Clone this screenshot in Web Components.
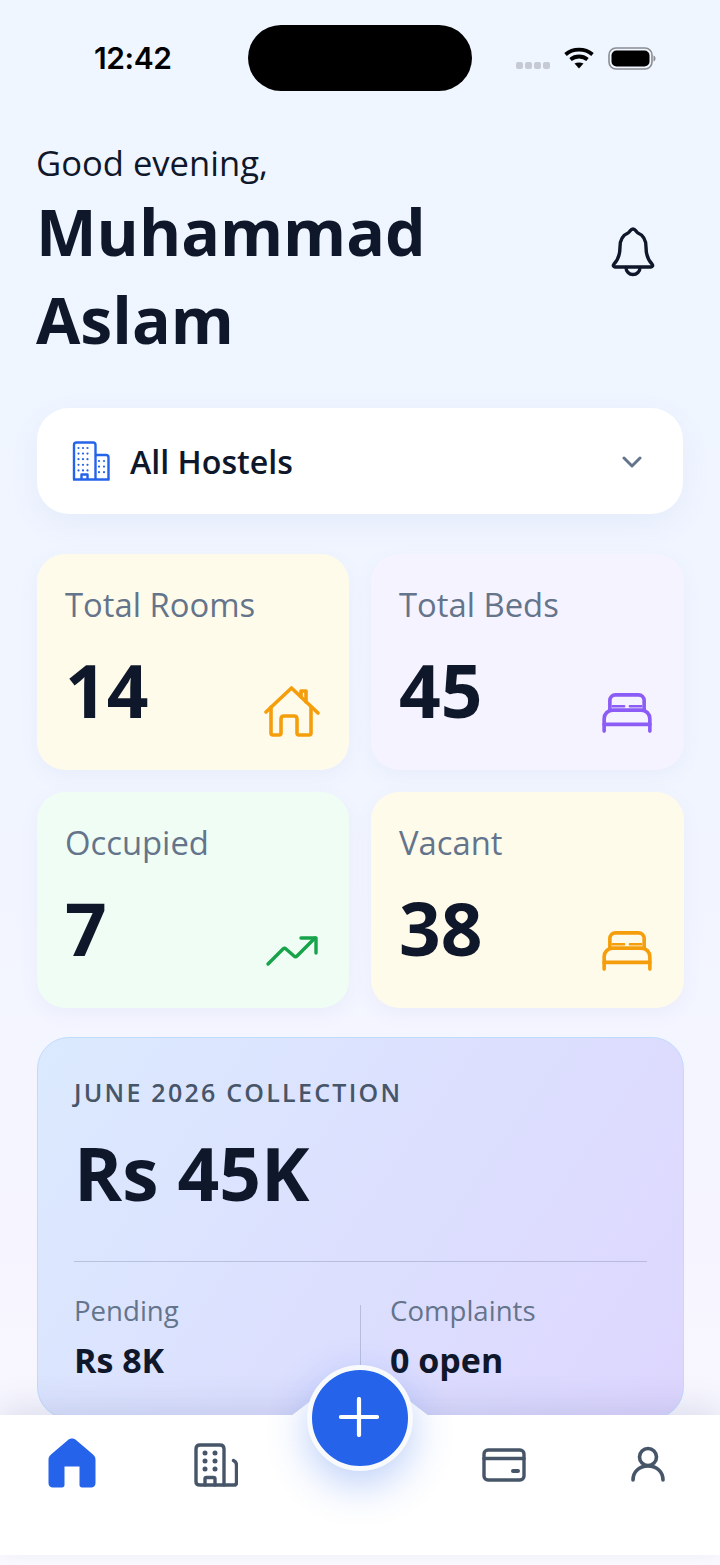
<!DOCTYPE html>
<html>
<head>
<meta charset="utf-8">
<title>Hostel dashboard</title>
<style>
  html, body { margin: 0; padding: 0; }
  body { width: 720px; height: 1565px; overflow: hidden; font-family: "Open Sans", sans-serif; color: #0f172a; }
  svg { display: block; }
</style>
</head>
<body>
<app-screen>
  <status-bar></status-bar>
  <greeting-header greeting="Good evening," name="Muhammad Aslam"></greeting-header>
  <hostel-picker label="All Hostels"></hostel-picker>
  <div slot="stats">
    <stat-card label="Total Rooms" value="14" tone="#fffbeb">
      <svg slot="icon" width="56" height="52" viewBox="0 0 56 52" fill="none" stroke="#f59e0b" stroke-width="3.6" stroke-linecap="round" stroke-linejoin="round" style="margin:0 -1px 0 0">
        <path d="M2 26 27.500 2 L54 27"/>
        <path d="M37 11V5h5v11"/>
        <path d="M7 21V47c0 1.500.7 2 2 2h6c1.300 0 2-.5 2-2V33c0-2 1-3 3-3h10c2 0 3 1 3 3V47c0 1.500.7 2 2 2h10c1.300 0 2-.5 2-2V21"/>
      </svg>
    </stat-card>
    <stat-card label="Total Beds" value="45" tone="#f5f3ff">
      <svg slot="icon" width="50" height="40" viewBox="0 0 52 42" fill="none" stroke="#8b5cf6" stroke-width="3.8" stroke-linecap="round" stroke-linejoin="round" style="margin:0 2px 5px 0">
        <path d="M2 40V27c0-5 4-9 9-9h30c5 0 9 4 9 9v13"/>
        <path d="M2 33h48"/>
        <path d="M8 18V8c0-3.500 2.500-6 6-6h24c3.500 0 6 2.500 6 6v10"/>
        <path d="M11 14h12M29 14h12" stroke-width="2.600"/>
      </svg>
    </stat-card>
    <stat-card label="Occupied" value="7" tone="#f0fdf4">
      <svg slot="icon" width="54" height="32" viewBox="0 0 54 32" fill="none" stroke="#16a34a" stroke-width="3.4" stroke-linecap="round" stroke-linejoin="round" style="margin-bottom:9px">
        <path d="M3 29 18 14c1-1 2-1 3 0l8 7c1 1 2 1 3 0L50 3"/>
        <path d="M36 3h15v15"/>
      </svg>
    </stat-card>
    <stat-card label="Vacant" value="38" tone="#fffbeb">
      <svg slot="icon" width="50" height="40" viewBox="0 0 52 42" fill="none" stroke="#f59e0b" stroke-width="3.8" stroke-linecap="round" stroke-linejoin="round" style="margin:0 2px 5px 0">
        <path d="M2 40V27c0-5 4-9 9-9h30c5 0 9 4 9 9v13"/>
        <path d="M2 33h48"/>
        <path d="M8 18V8c0-3.500 2.500-6 6-6h24c3.500 0 6 2.500 6 6v10"/>
        <path d="M11 14h12M29 14h12" stroke-width="2.600"/>
      </svg>
    </stat-card>
  </div>
  <collection-card slot="after" title="June 2026 Collection" amount="Rs 45K">
    <stat-split label="Pending" value="Rs 8K"></stat-split>
    <stat-split label="Complaints" value="0 open"></stat-split>
  </collection-card>
  <bottom-nav slot="overlay"></bottom-nav>
</app-screen>

<script>
  class AppScreen extends HTMLElement {
    constructor() {
      super();
      this.attachShadow({ mode: "open" });
    }

    connectedCallback() {
      this.shadowRoot.innerHTML = `
        <style>
          :host {
            display: block;
            position: relative;
            width: 720px;
            height: 1565px;
            overflow: hidden;
            background: linear-gradient(180deg, #eff6ff 0%, #f0f5ff 45%, #f6f5ff 80%, #fafaff 100%);
          }
          .body { display: flex; flex-direction: column; padding: 0 36px 0 37px; }
          ::slotted([slot="stats"]) {
            display: grid;
            grid-template-columns: 312px 313px;
            grid-auto-rows: 216px;
            column-gap: 22px;
            row-gap: 22px;
            margin: 40px 0 29px 0;
          }
        </style>
        <div class="body">
          <slot></slot>
          <slot name="stats"></slot>
          <slot name="after"></slot>
        </div>
        <slot name="overlay"></slot>
      `;
    }
  }

  class StatusBar extends HTMLElement {
    constructor() {
      super();
      this.attachShadow({ mode: "open" });
    }

    connectedCallback() {
      this.shadowRoot.innerHTML = `
        <style>
          :host { display: block; margin: 0 -36px 0 -37px; height: 139px; }
          .bar { display: flex; align-items: flex-start; height: 66px; padding-top: 25px; }
          .time {
            width: 154px;
            margin-left: 94px;
            font: 600 30px/66px Inter, sans-serif;
            letter-spacing: -0.4px;
            height: 66px;
            color: #000;
          }
          .island { width: 224px; height: 66px; border-radius: 33px; background: #000; }
          .dots { display: flex; gap: 2px; margin: 37px 0 0 44px; }
          .dots i { width: 7px; height: 7px; border-radius: 2px; background: #c6cad5; }
          .wifi { margin: 22px 0 0 14px; }
          .battery { margin: 22px 0 0 14px; }
        </style>
        <div class="bar">
          <div class="time">12:42</div>
          <div class="island"></div>
          <div class="dots"><i></i><i></i><i></i><i></i></div>
          <svg class="wifi" width="30" height="22" viewBox="0 0 30 22" fill="none" stroke="#000" stroke-width="3.800">
            <path d="M1.500 7.500C9 1 21 1 28.500 7.500"/>
            <path d="M6.500 12.500C11.500 8.500 18.500 8.500 23.500 12.500"/>
            <path d="M15 21.500 10.500 16.500C13 15 17 15 19.500 16.500Z" fill="#000" stroke="none"/>
          </svg>
          <svg class="battery" width="48" height="24" viewBox="0 0 48 24">
            <rect x="1" y="1" width="43" height="21" rx="7" fill="none" stroke="#8b8d92" stroke-width="1.600"/>
            <rect x="3.500" y="3.500" width="38" height="16" rx="5" fill="#000"/>
            <path d="M45.500 8.500c1.500.5 2 1.700 2 3s-.5 2.500-2 3z" fill="#8b8d92"/>
          </svg>
        </div>
      `;
    }
  }

  class GreetingHeader extends HTMLElement {
    constructor() {
      super();
      this.attachShadow({ mode: "open" });
    }

    connectedCallback() {
      const greeting = this.getAttribute("greeting") || "";
      const name = this.getAttribute("name") || "";
      this.shadowRoot.innerHTML = `
        <style>
          :host { display: flex; align-items: flex-start; justify-content: space-between; height: 269px; }
          .text { margin-left: -1px; }
          .hello { font-size: 34.600px; line-height: 48px; color: #0f172a; }
          .name {
            width: 440px;
            font-size: 64.300px;
            font-weight: 700;
            line-height: 88px;
            color: #0f172a;
          }
          svg { margin: 88px 29px 0 0; }
        </style>
        <div class="text">
          <div class="hello">${greeting}</div>
          <div class="name">${name}</div>
        </div>
        <svg width="44" height="50" viewBox="0 0 44 50" fill="none" stroke="#0f172a" stroke-width="3.400" stroke-linecap="round" stroke-linejoin="round">
          <path d="M22 2c2.500 0 3 3 5 4 6 2.500 8 8 8 14 0 9 2 13 6 17 1.200 1.400.6 3-1 3H4c-1.600 0-2.200-1.600-1-3 4-4 6-8 6-17 0-6 2-11.500 8-14 2-1 2.500-4 5-4z"/>
          <path d="M15 40.500a7 7 0 0 0 14 0"/>
        </svg>
      `;
    }
  }

  class HostelPicker extends HTMLElement {
    constructor() {
      super();
      this.attachShadow({ mode: "open" });
    }

    connectedCallback() {
      const label = this.getAttribute("label") || "";
      let dots = "";
      for (let row = 0; row < 5; row++) {
        for (let col = 0; col < 3; col++) {
          dots += `<circle cx="${6.5 + col * 4.5}" cy="${7 + row * 5.6}" r="1.100"/>`;
        }
      }
      for (let row = 0; row < 3; row++) {
        for (let col = 0; col < 2; col++) {
          dots += `<circle cx="${27 + col * 5}" cy="${20 + row * 5.6}" r="1.100"/>`;
        }
      }
      this.shadowRoot.innerHTML = `
        <style>
          :host {
            display: flex;
            align-items: center;
            height: 106px;
            margin-right: 1px;
            padding: 0 41px 0 35px;
            border-radius: 32px;
            background: #fff;
            box-shadow: 0 10px 30px rgba(100, 116, 180, 0.07);
          }
          .label { flex: 1; margin-left: 20px; font-size: 32.200px; font-weight: 600; color: #0f172a; }
          .chevron { margin-top: 1px; }
        </style>
        <svg width="38" height="40" viewBox="0 0 38 40" fill="none" stroke="#2563eb" stroke-width="2.400" stroke-linejoin="round">
          <path d="M2 38.500V4c0-1.500 1-2.500 2.500-2.500H21c1.500 0 2.500 1 2.500 2.500v34.500"/>
          <path d="M23.500 14H34c1.500 0 2.500 1 2.500 2.500v22"/>
          <path d="M1 38.500h36.500"/>
          <path d="M9.500 38.500v-5h6v5"/>
          <g fill="#2563eb" stroke="none">${dots}</g>
        </svg>
        <div class="label">${label}</div>
        <svg class="chevron" width="20" height="12" viewBox="0 0 20 12" fill="none" stroke="#64748b" stroke-width="3" stroke-linecap="round" stroke-linejoin="round">
          <path d="M2 2l8 8 8-8"/>
        </svg>
      `;
    }
  }

  class StatCard extends HTMLElement {
    constructor() {
      super();
      this.attachShadow({ mode: "open" });
    }

    connectedCallback() {
      const label = this.getAttribute("label") || "";
      const value = this.getAttribute("value") || "";
      const tone = this.getAttribute("tone") || "#fff";
      this.shadowRoot.innerHTML = `
        <style>
          :host {
            display: flex;
            flex-direction: column;
            padding: 28px 30px 32px 28px;
            border-radius: 28px;
            background: ${tone};
            box-shadow: 0 6px 20px rgba(100, 116, 180, 0.06);
          }
          .label { font-size: 32.800px; line-height: 46px; color: #64748b; }
          .row { display: flex; justify-content: space-between; align-items: flex-end; margin-top: 8px; flex: 1; }
          .value { margin-bottom: 6px; font-size: 73px; font-weight: 700; line-height: 84px; color: #0f172a; }
        </style>
        <div class="label">${label}</div>
        <div class="row">
          <div class="value">${value}</div>
          <slot name="icon"></slot>
        </div>
      `;
    }
  }

  class CollectionCard extends HTMLElement {
    constructor() {
      super();
      this.attachShadow({ mode: "open" });
    }

    connectedCallback() {
      const title = this.getAttribute("title") || "";
      const amount = this.getAttribute("amount") || "";
      this.shadowRoot.innerHTML = `
        <style>
          :host {
            display: block;
            height: 382px;
            box-sizing: border-box;
            padding: 35px 36px 0;
            border: 1px solid #bfdbfe;
            border-radius: 32px;
            background: linear-gradient(125deg, #dbeafe 0%, #ddd6fe 100%);
          }
          .title {
            font-size: 25px;
            font-weight: 600;
            line-height: 38px;
            letter-spacing: 2.250px;
            text-transform: uppercase;
            color: #475569;
          }
          .amount { margin: 13px 0 0 0; font-size: 73px; font-weight: 700; line-height: 98px; color: #0f172a; }
          .splits {
            display: grid;
            grid-template-columns: 286px 1fr;
            margin-top: 39px;
            padding-top: 43px;
            border-top: 1px solid rgba(100, 116, 139, 0.3);
          }
          ::slotted(stat-split:last-child) { border-left: 1px solid rgba(100, 116, 139, 0.3); padding-left: 29px; }
        </style>
        <div class="title">${title}</div>
        <div class="amount">${amount}</div>
        <div class="splits"><slot></slot></div>
      `;
    }
  }

  class StatSplit extends HTMLElement {
    constructor() {
      super();
      this.attachShadow({ mode: "open" });
    }

    connectedCallback() {
      this.shadowRoot.innerHTML = `
        <style>
          :host { display: block; }
          .label { margin-top: -1px; font-size: 27.600px; line-height: 12px; color: #64748b; }
          .value { margin-top: 23px; font-size: 34px; font-weight: 700; line-height: 42px; color: #0f172a; }
        </style>
        <div class="label">${this.getAttribute("label")}</div>
        <div class="value">${this.getAttribute("value")}</div>
      `;
    }
  }

  class BottomNav extends HTMLElement {
    constructor() {
      super();
      this.attachShadow({ mode: "open" });
    }

    connectedCallback() {
      this.shadowRoot.innerHTML = `
        <style>
          :host {
            position: absolute;
            left: 0;
            right: 0;
            top: 1415px;
            height: 140px;
            display: block;
            background: #fff;
            box-shadow: 0 -10px 30px rgba(71, 85, 140, 0.14);
          }
          .row { position: relative; height: 100%; display: flex; justify-content: space-between; align-items: flex-start; padding: 23px 54px 0 48px; }
          .notch { position: absolute; left: 291px; top: -16px; }
          .fab {
            position: absolute;
            left: 307px;
            top: -50px;
            box-sizing: border-box;
            width: 106px;
            height: 106px;
            padding: 0;
            border: 5px solid #f8fafc;
            border-radius: 50%;
            background: #2563eb;
            display: flex;
            align-items: center;
            justify-content: center;
            box-shadow: 0 14px 40px rgba(37, 99, 235, 0.3);
          }
          .fab svg { margin-top: -2px; margin-left: -2px; }
          .left, .right { display: flex; align-items: flex-start; }
          .left { gap: 98px; }
          .right { gap: 105px; margin-top: 10px; }
        </style>
        <div class="row">
          <svg class="notch" width="138" height="17" viewBox="0 0 138 17"><path d="M0 17 22 0h94l22 17z" fill="#fff"/></svg>
          <div class="left">
            <svg width="48" height="50" viewBox="0 0 48 50" fill="#2563eb">
              <path d="M20 2c2.300-2 5.700-2 8 0l17 14.500c1.800 1.500 2.500 3 2.500 5.500V45c0 2.800-1.700 4.500-4.500 4.500H34c-1.500 0-2.500-1-2.500-2.500V28.500h-15V47c0 1.500-1 2.500-2.500 2.500H5c-2.800 0-4.500-1.700-4.500-4.500V22c0-2.500.7-4 2.500-5.500z"/>
            </svg>
            <svg width="44" height="44" viewBox="0 0 44 44" fill="none" stroke="#475569" stroke-width="3.400" stroke-linecap="round" stroke-linejoin="round" style="margin-top:5px">
              <path d="M2 39V6c0-2.500 1.500-4 4-4h20c2.500 0 4 1.500 4 4v36H6c-2.500 0-4-1-4-3z"/>
              <path d="M30 42h10c1.500 0 2.500-1 2.500-2.500V22c0-2-1-3.500-3-4.500"/>
              <path d="M11 42v-6c0-1 .6-1.500 1.500-1.500h7c1 0 1.500.5 1.500 1.500v6"/>
              <g fill="#475569" stroke="none">
                <circle cx="11" cy="10" r="2.500"/><circle cx="21" cy="10" r="2.500"/>
                <circle cx="11" cy="18" r="2.500"/><circle cx="21" cy="18" r="2.500"/>
                <circle cx="11" cy="26" r="2.500"/><circle cx="21" cy="26" r="2.500"/>
              </g>
            </svg>
          </div>
          <button class="fab" aria-label="Add">
            <svg width="40" height="40" viewBox="0 0 40 40" fill="none" stroke="#fff" stroke-width="4.200" stroke-linecap="round">
              <path d="M20 2v36M2 20h36"/>
            </svg>
          </button>
          <div class="right">
            <svg width="44" height="34" viewBox="0 0 44 34" fill="none" stroke="#475569" stroke-width="3.400" stroke-linecap="round" stroke-linejoin="round">
              <rect x="2" y="2" width="40" height="30" rx="4"/>
              <path d="M2 10.500h40"/>
              <path d="M31 23h5" stroke-width="4"/>
            </svg>
            <svg width="36" height="36" viewBox="0 0 36 36" fill="none" stroke="#475569" stroke-width="3.600" stroke-linecap="round" stroke-linejoin="round" style="margin:-2px 0 0 -1px">
              <circle cx="18" cy="11" r="8.500"/>
              <path d="M3 34c0-8 6-14 15-14s15 6 15 14"/>
            </svg>
          </div>
        </div>
      `;
    }
  }

  customElements.define("app-screen", AppScreen);
  customElements.define("status-bar", StatusBar);
  customElements.define("greeting-header", GreetingHeader);
  customElements.define("hostel-picker", HostelPicker);
  customElements.define("stat-card", StatCard);
  customElements.define("collection-card", CollectionCard);
  customElements.define("stat-split", StatSplit);
  customElements.define("bottom-nav", BottomNav);
</script>
</body>
</html>
